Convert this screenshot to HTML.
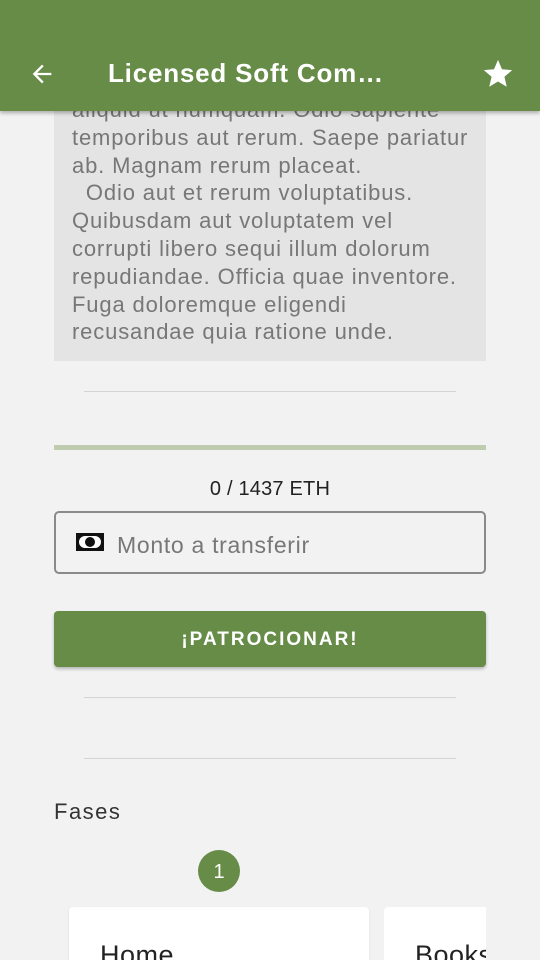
<!DOCTYPE html>
<html style="overflow:hidden;height:960px"><head><style>
*{margin:0;padding:0;box-sizing:border-box}
body{width:540px;height:960px;overflow:hidden;background:#f2f2f2;font-family:"Liberation Sans",sans-serif;position:relative}
.hdr{position:absolute;left:0;top:0;width:540px;height:111px;background:#668c48;box-shadow:0 2px 4px rgba(0,0,0,.3);z-index:5}
.title{position:absolute;left:108px;top:58px;color:#fff;font-size:26px;font-weight:bold;letter-spacing:0.8px}
.txt{position:absolute;left:54px;top:0;width:432px;height:361px;background:#e4e4e4;overflow:hidden}
.txt div{position:absolute;left:18px;top:96px;width:410px;color:#777;font-size:22px;line-height:27.8px;white-space:pre;letter-spacing:0.85px}
.hr{position:absolute;left:84px;width:372px;height:1px;background:#d4d4d4}
</style></head><body>
<div class="txt"><div>aliquid ut numquam. Odio sapiente
temporibus aut rerum. Saepe pariatur
ab. Magnam rerum placeat.
  Odio aut et rerum voluptatibus.
Quibusdam aut voluptatem vel
corrupti libero sequi illum dolorum
repudiandae. Officia quae inventore.
Fuga doloremque eligendi
recusandae quia ratione unde.</div></div>
<div class="hdr">
<svg style="position:absolute;left:28px;top:60px" width="28" height="28" viewBox="0 0 24 24"><path d="M20 11H7.83l5.59-5.59L12 4l-8 8 8 8 1.41-1.41L7.83 13H20v-2z" fill="#fff"/></svg>
<div class="title">Licensed Soft Com…</div>
<svg style="position:absolute;left:481px;top:57px" width="34" height="34" viewBox="0 0 24 24"><path d="M12 17.27L18.18 21l-1.64-7.03L22 9.24l-7.19-.61L12 2 9.19 8.63 2 9.24l5.46 4.73L5.82 21z" fill="#fff"/></svg>
</div>
<div class="hr" style="top:391px"></div>
<div style="position:absolute;left:54px;top:445px;width:432px;height:5px;background:#bfccb0"></div>
<div style="position:absolute;left:0;width:540px;top:478px;text-align:center;font-size:20px;color:#222;letter-spacing:0.2px">0 / 1437 ETH</div>
<div style="position:absolute;left:54px;top:511px;width:432px;height:63px;border:2px solid #8a8a8a;border-radius:5px"></div>
<div style="position:absolute;left:76px;top:533px;width:28px;height:18px;background:#111"><div style="position:absolute;left:3px;top:3px;width:22px;height:12px;background:#fff;border-radius:6px"></div><div style="position:absolute;left:9px;top:4px;width:10px;height:10px;background:#111;border-radius:50%"></div></div>
<div style="position:absolute;left:117px;top:532px;font-size:23px;color:#777;letter-spacing:0.7px">Monto a transferir</div>
<div style="position:absolute;left:54px;top:611px;width:432px;height:56px;background:#668c48;border-radius:4px;box-shadow:0 2px 3px rgba(0,0,0,.25);color:#fff;font-size:19px;font-weight:bold;letter-spacing:2px;text-align:center;line-height:58px">¡PATROCIONAR!</div>
<div class="hr" style="top:697px"></div>
<div class="hr" style="top:758px"></div>
<div style="position:absolute;left:54px;top:799px;font-size:22px;color:#333;letter-spacing:1.5px">Fases</div>
<div style="position:absolute;left:198px;top:850px;width:42px;height:42px;border-radius:50%;background:#668c48;color:#fff;font-size:20px;text-align:center;line-height:44px">1</div>
<div style="position:absolute;left:69px;top:907px;width:300px;height:53px;background:#fff;border-radius:4px 4px 0 0;box-shadow:0 1px 2px rgba(0,0,0,.1);overflow:hidden"><div style="position:absolute;left:31px;top:33px;font-size:27px;color:#222;letter-spacing:0.5px">Home</div></div>
<div style="position:absolute;left:384px;top:907px;width:102px;height:53px;background:#fff;border-radius:4px 0 0 0;overflow:hidden"><div style="position:absolute;left:31px;top:33px;font-size:27px;color:#222;letter-spacing:0.5px">Books</div></div>
</body></html>
